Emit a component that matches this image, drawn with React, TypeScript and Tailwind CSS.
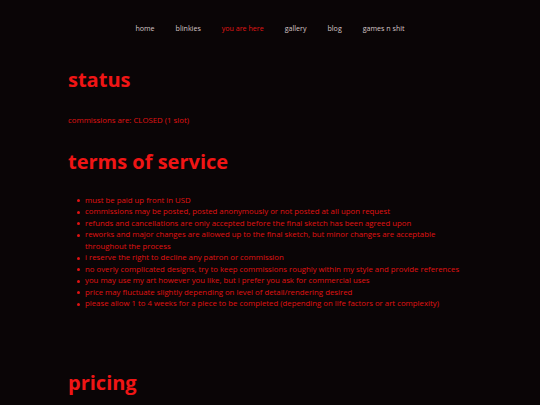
import React from "react";

const nav = ["home", "blinkies", "you are here", "gallery", "blog", "games n shit"];
const items = [
  "must be paid up front in USD",
  "commissions may be posted, posted anonymously or not posted at all upon request",
  "refunds and cancellations are only accepted before the final sketch has been agreed upon",
  "reworks and major changes are allowed up to the final sketch, but minor changes are acceptable throughout the process",
  "i reserve the right to decline any patron or commission",
  "no overly complicated designs, try to keep commissions roughly within my style and provide references",
  "you may use my art however you like, but i prefer you ask for commercial uses",
  "price may fluctuate slightly depending on level of detail/rendering desired",
  "please allow 1 to 4 weeks for a piece to be completed (depending on life factors or art complexity)",
];

export default function App() {
  return (
    <div
      className="w-[540px] h-[405px] overflow-hidden bg-[#0a0506]"
      style={{ fontFamily: '"Open Sans", "Noto Sans", sans-serif' }}
    >
      <nav className="pt-[22px] flex justify-center gap-[21px] text-[7.1px] leading-[12px] text-[#d6c6c6]">
        {nav.map((n) => (
          <span key={n} className={n === "you are here" ? "text-[#e01515]" : ""}>
            {n}
          </span>
        ))}
      </nav>
      <main className="pl-[68px] pr-[72px] text-[#e01212]">
        <h1 className="mt-[32px] text-[20px] leading-[28px] font-bold text-[#f01515]">status</h1>
        <p className="mt-[21px] text-[7.8px] leading-[11.5px]">commissions are: CLOSED (1 slot)</p>
        <h1 className="mt-[21px] text-[20px] leading-[28px] font-bold text-[#f01515]">terms of service</h1>
        <ul className="mt-[19px] text-[7.8px] leading-[11.5px]">
          {items.map((t) => (
            <li key={t} className="flex">
              <span className="w-[17px] shrink-0 flex items-start pt-[4.5px] pl-[8.5px]">
                <span className="block w-[3px] h-[3px] rounded-full bg-[#e01212]" />
              </span>
              <span>{t}</span>
            </li>
          ))}
        </ul>
        <h1 className="mt-[59px] text-[20px] leading-[28px] font-bold text-[#f01515]">pricing</h1>
      </main>
    </div>
  );
}
